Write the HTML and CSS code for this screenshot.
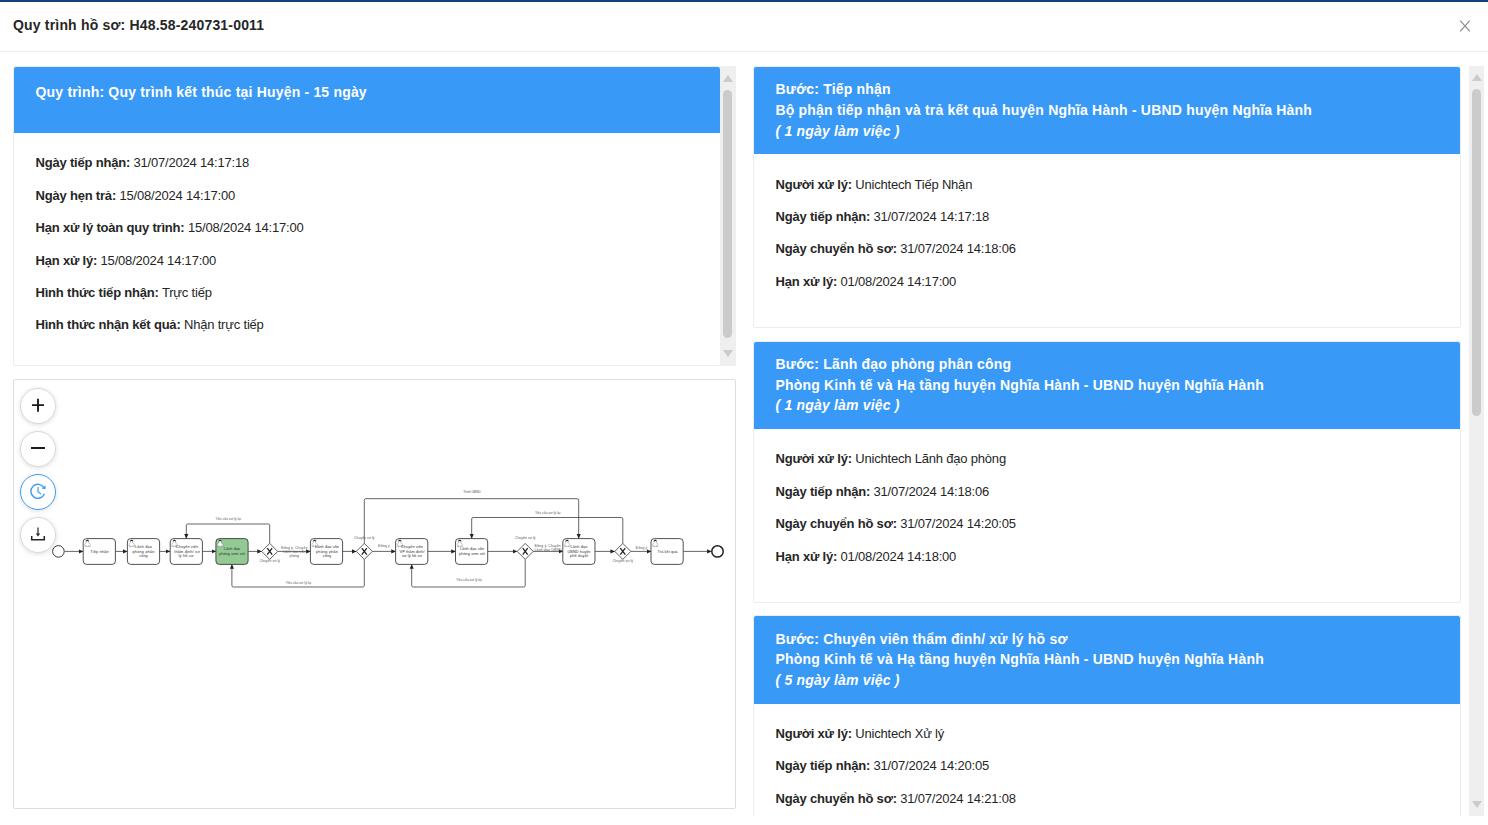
FILE: index.html
```
<!DOCTYPE html>
<html lang="vi">
<head>
<meta charset="utf-8">
<title>Quy trình hồ sơ</title>
<link rel="stylesheet" href="styles.css">
</head>
<body>
<header class="modal-head">
  <h1 class="modal-title">Quy trình hồ sơ: H48.58-240731-0011</h1>
  <svg class="close" width="12" height="12" viewBox="0 0 12 12"><path d="M1.2.6 10.8 11.4M10.8.6 1.2 11.4" fill="none" stroke="#8c8c8c" stroke-width="1.2"/></svg>
</header>
<main class="modal-body">
  <div class="left">
    <div class="summary">
      <section class="card info">
        <div class="card-head"><div>Quy trình: Quy trình kết thúc tại Huyện - 15 ngày</div></div>
        <div class="card-body">
          <p><b>Ngày tiếp nhận:</b> 31/07/2024 14:17:18</p>
          <p><b>Ngày hẹn trả:</b> 15/08/2024 14:17:00</p>
          <p><b>Hạn xử lý toàn quy trình:</b> 15/08/2024 14:17:00</p>
          <p><b>Hạn xử lý:</b> 15/08/2024 14:17:00</p>
          <p><b>Hình thức tiếp nhận:</b> Trực tiếp</p>
          <p><b>Hình thức nhận kết quả:</b> Nhận trực tiếp</p>
        </div>
      </section>
      <div class="scrollbar bar-left"><i class="up"></i><i class="thumb"></i><i class="down"></i></div>
    </div>
    <section class="canvas">
      <svg class="diagram" width="721" height="428" viewBox="14 380 721 428">
        <defs>
          <marker id="arrow" viewBox="0 0 4 4" refX="3.8" refY="2" markerWidth="4.6" markerHeight="4.6" markerUnits="userSpaceOnUse" orient="auto"><path d="M0 .2 4 2 0 3.8Z" fill="#222"/></marker>
          <g id="task">
            <rect width="32.2" height="25.8" rx="3.4" stroke="#333" stroke-width=".85"/>
            <path d="M1.7 8V5.8q0-1 1.5-1.7-.6-.7-.6-1.5Q2.8 1.2 4.2 1.2t1.5 1.3q0 .9-.7 1.6 1.9.6 1.9 1.7V8ZM3 8V6.5M5.6 8V6.5" fill="#fff" stroke="#777" stroke-width=".4"/>
            <path d="M2.8 2.9Q2.6 1.1 4.2 1.1t1.5 1.7Q4.2 2.1 2.8 2.9Z" fill="#222"/>
          </g>
          <g id="gate">
            <path d="M0-8 8 0 0 8-8 0Z" fill="#fff" stroke="#333" stroke-width=".8"/>
            <path d="M-2.5-3.2 2.5 3.2M2.5-3.2-2.5 3.2" stroke="#222" stroke-width="1.3"/>
          </g>
        </defs>
        <g class="flow">
          <path d="M64.5 551.4H83.2"/><path d="M115.5 551.4H127.3"/><path d="M159.5 551.4H170"/><path d="M202.3 551.4H216"/>
          <path d="M248.3 551.4H261.7"/><path d="M277.7 551.4H310.5"/><path d="M342.6 551.4H356.3"/><path d="M372.3 551.4H395.6"/>
          <path d="M427.8 551.4H455.6"/><path d="M487.8 551.4H517.2"/><path d="M533.2 551.4H563"/><path d="M595.2 551.4H614.8"/>
          <path d="M630.8 551.4H651.2"/><path d="M683.4 551.4H711.5"/>
          <path d="M269.7 543.4V525.4Q269.7 524 268.3 524H187.8Q186.3 524 186.3 525.4V538.4"/>
          <path d="M364.3 559.4V585.3Q364.3 587 362.8 587H233.4Q231.9 587 231.9 585.5V564.4"/>
          <path d="M364.3 543.4V500.3Q364.3 498.7 365.8 498.7H577.2Q578.7 498.7 578.7 500.2V538.4"/>
          <path d="M525.2 559.4V585.5Q525.2 587 523.7 587H413.2Q411.7 587 411.7 585.5V564.4"/>
          <path d="M622.8 543.4V519Q622.8 517.5 621.3 517.5H473.2Q471.7 517.5 471.7 519V538.4"/>
        </g>
        <g fill="#fff">
          <use href="#task" x="83.2" y="538.6"/><use href="#task" x="127.4" y="538.6"/><use href="#task" x="170.2" y="538.6"/>
          <use href="#task" x="215.9" y="538.6" fill="#93c994"/>
          <use href="#task" x="310.4" y="538.6"/><use href="#task" x="395.6" y="538.6"/><use href="#task" x="455.5" y="538.6"/>
          <use href="#task" x="562.8" y="538.6"/><use href="#task" x="651" y="538.6"/>
          <circle cx="58.4" cy="551.4" r="5.8" stroke="#222" stroke-width=".9"/>
          <circle cx="717.5" cy="551.4" r="5.7" stroke="#222" stroke-width="1.5"/>
        </g>
        <use href="#gate" x="269.7" y="551.4"/><use href="#gate" x="364.3" y="551.4"/><use href="#gate" x="525.2" y="551.4"/><use href="#gate" x="622.8" y="551.4"/>
        <g class="task-text">
          <text x="99.5" y="552.8" textLength="18.5">Tiếp nhận</text>
          <text x="143.5" y="548.4" textLength="17">Lãnh đạo</text><text x="143.5" y="552.8" textLength="22">phòng phân</text><text x="143.5" y="557.2">công</text>
          <text x="187" y="548.4" textLength="22.5">Chuyên viên</text><text x="187" y="552.8" textLength="25.5">thẩm định/ xử</text><text x="186" y="557.2" textLength="15">lý hồ sơ</text>
          <text x="232" y="550.4" textLength="16.5">Lãnh đạo</text><text x="232" y="554.8" textLength="26">phòng xem xét</text>
          <text x="327" y="548.4" textLength="24">Lãnh đạo văn</text><text x="327" y="552.8" textLength="22">phòng phân</text><text x="327" y="557.2">công</text>
          <text x="412" y="548.4" textLength="22">Chuyên viên</text><text x="412" y="552.8" textLength="25">VP thẩm định/</text><text x="412" y="557.2" textLength="20">xử lý hồ sơ</text>
          <text x="472" y="550.4" textLength="24">Lãnh đạo văn</text><text x="472" y="554.8" textLength="26">phòng xem xét</text>
          <text x="579" y="548.4" textLength="17">Lãnh đạo</text><text x="579" y="552.8" textLength="23">UBND huyện</text><text x="579" y="557.2" textLength="18">phê duyệt</text>
          <text x="667.5" y="552.8" textLength="20">Trả kết quả</text>
        </g>
        <g class="flow-text">
          <text x="228.2" y="520.4" textLength="25.6">Yêu cầu xử lý lại</text>
          <text x="269.7" y="562.4" textLength="20.5">Chuyển xử lý</text>
          <text x="294.3" y="549.2" textLength="26">Đồng ý. Chuyển</text><text x="294.3" y="553.2" textLength="22">Lãnh đạo văn</text><text x="294.3" y="557.2">phòng</text>
          <text x="298.5" y="584.4" textLength="25.6">Yêu cầu xử lý lại</text>
          <text x="364.3" y="539.2" textLength="20.5">Chuyển xử lý</text>
          <text x="384" y="546.9" textLength="11.3">Đồng ý</text>
          <text x="472" y="493" textLength="17.5">Trình UBND</text>
          <text x="469" y="581.4" textLength="25.6">Yêu cầu xử lý lại</text>
          <text x="525.2" y="539.2" textLength="20.5">Chuyển xử lý</text>
          <text x="547.7" y="514.2" textLength="25.6">Yêu cầu xử lý lại</text>
          <text x="547.7" y="546.9" textLength="26">Đồng ý. Chuyển</text><text x="548" y="551.2" textLength="27">Lãnh đạo UBND</text>
          <text x="622.8" y="562.4" textLength="20.5">Chuyển xử lý</text>
          <text x="641.5" y="549.2" textLength="11.3">Đồng ý</text>
        </g>
      </svg>
      <div class="tools">
        <button class="tool"><svg width="16" height="16" viewBox="0 0 16 16"><path d="M8 .8V13.8M2 7.1H14" stroke="#1c1c1c" stroke-width="1.9"/></svg></button>
        <button class="tool"><svg width="16" height="16" viewBox="0 0 16 16"><path d="M1 7H15" stroke="#1c1c1c" stroke-width="2"/></svg></button>
        <button class="tool active"><svg width="16" height="16" viewBox="0 0 16 16" fill="none" stroke="#3b9cf5" stroke-width="1.4"><path d="M13.9 3.8A7 7 0 1 0 14.4 9.8"/><path d="M8 3V7.7L11 10" stroke-width="1.2"/><path d="M15.5 1.3V5.3L11.7 4.5Z" fill="#3b9cf5" stroke="none"/></svg></button>
        <button class="tool"><svg width="16" height="16" viewBox="0 0 16 16" fill="none" stroke="#262626" stroke-width="1.5"><path d="M1.7 9V12.7H14.3V9"/><path d="M8 .4V8" stroke-width="1.2"/><path d="M5.8 6.6H10.2L8 9.6Z" fill="#262626" stroke="none"/></svg></button>
      </div>
    </section>
  </div>
  <div class="right">
    <div class="steps">
      <section class="card step">
        <div class="card-head"><div>Bước: Tiếp nhận</div><div>Bộ phận tiếp nhận và trả kết quả huyện Nghĩa Hành - UBND huyện Nghĩa Hành</div><div class="days">( 1 ngày làm việc )</div></div>
        <div class="card-body">
          <p><b>Người xử lý:</b> Unichtech Tiếp Nhận</p>
          <p><b>Ngày tiếp nhận:</b> 31/07/2024 14:17:18</p>
          <p><b>Ngày chuyển hồ sơ:</b> 31/07/2024 14:18:06</p>
          <p><b>Hạn xử lý:</b> 01/08/2024 14:17:00</p>
        </div>
      </section>
      <section class="card step">
        <div class="card-head"><div>Bước: Lãnh đạo phòng phân công</div><div>Phòng Kinh tế và Hạ tầng huyện Nghĩa Hành - UBND huyện Nghĩa Hành</div><div class="days">( 1 ngày làm việc )</div></div>
        <div class="card-body">
          <p><b>Người xử lý:</b> Unichtech Lãnh đạo phòng</p>
          <p><b>Ngày tiếp nhận:</b> 31/07/2024 14:18:06</p>
          <p><b>Ngày chuyển hồ sơ:</b> 31/07/2024 14:20:05</p>
          <p><b>Hạn xử lý:</b> 01/08/2024 14:18:00</p>
        </div>
      </section>
      <section class="card step">
        <div class="card-head"><div>Bước: Chuyên viên thẩm đinh/ xử lý hồ sơ</div><div>Phòng Kinh tế và Hạ tầng huyện Nghĩa Hành - UBND huyện Nghĩa Hành</div><div class="days">( 5 ngày làm việc )</div></div>
        <div class="card-body">
          <p><b>Người xử lý:</b> Unichtech Xử lý</p>
          <p><b>Ngày tiếp nhận:</b> 31/07/2024 14:20:05</p>
          <p><b>Ngày chuyển hồ sơ:</b> 31/07/2024 14:21:08</p>
        </div>
      </section>
    </div>
    <div class="scrollbar bar-right"><i class="up"></i><i class="thumb"></i><i class="down"></i></div>
  </div>
</main>
</body>
</html>
```
FILE: styles.css
```
* { box-sizing: border-box; }
body {
  margin: 0;
  height: 825px;
  overflow: hidden;
  background: #fff;
  color: #262626;
  font-family: "Liberation Sans", Arial, sans-serif;
  font-size: 13px;
}
.modal-head {
  display: flex;
  align-items: center;
  justify-content: space-between;
  height: 52px;
  padding: 0 17px 4px 13px;
  border-top: 2px solid #10427b;
  border-bottom: 1px solid #ececec;
}
.modal-title { margin: 0; font-size: 14px; letter-spacing: .18px; }
.close { margin-top: 3px; }
.modal-body { display: flex; padding: 14px 4px 9px 13px; height: 773px; }
.left { display: flex; flex-direction: column; gap: 13px; width: 723px; margin-right: 17px; }
.summary { display: flex; height: 300px; }
.card { border: 1px solid #ececec; border-radius: 2px; }
.info { flex: 1; border-right: 0; }
.card-head {
  background: #3899f7;
  color: #fff;
  font-size: 14px;
  font-weight: bold;
  line-height: 20.6px;
  letter-spacing: .19px;
  padding: 12.4px 21.5px;
  border-radius: 2px 2px 0 0;
  white-space: nowrap;
}
.info .card-head { height: 66px; padding-top: 15px; }
.days { font-style: italic; }
.card-body { padding: 14.3px 21.5px 0; }
.card-body p { margin: 0; line-height: 32.4px; letter-spacing: -.195px; white-space: nowrap; }
.scrollbar {
  display: flex;
  flex-direction: column;
  align-items: center;
  width: 15px;
  background: #efefef;
}
.up, .down { border: 5px solid transparent; border-top: 0; border-bottom: 7px solid #cbcbcb; margin-top: 9px; }
.down { border-bottom: 0; border-top: 7px solid #cbcbcb; margin: auto 0 9px; }
.thumb { width: 9px; border-radius: 5px; background: #cbcbcb; }
.bar-left { width: 16px; padding-right: 1px; }
.bar-left .thumb { height: 248px; margin-top: 8px; }
.bar-right .thumb { height: 327px; margin-top: 8px; }
.bar-right .up { margin-top: 8px; }
.bar-right .down { margin-bottom: 8px; }
.canvas { position: relative; width: 723px; height: 430px; border: 1px solid #dedede; border-radius: 2px; }
.diagram { display: block; }
.flow path { fill: none; stroke: #333; stroke-width: .75; marker-end: url(#arrow); }
.task-text { font-size: 3.85px; text-anchor: middle; fill: #333; }
.flow-text { font-size: 3.4px; text-anchor: middle; fill: #555; }
.tools { position: absolute; left: 6px; top: 8px; display: flex; flex-direction: column; gap: 7px; }
.tool {
  display: flex;
  align-items: center;
  justify-content: center;
  width: 36px;
  height: 36px;
  padding: 0;
  border: 1px solid #d9d9d9;
  border-radius: 50%;
  background: #fff;
  box-shadow: 0 1px 5px rgba(0, 0, 0, .13);
}
.tool svg { overflow: visible; }
.tool.active { border-color: #3b9cf5; }
.right { display: flex; justify-content: space-between; width: 731px; height: 750px; }
.steps { display: flex; flex-direction: column; gap: 12.7px; width: 708px; overflow: hidden; }
.step { flex: none; height: 262px; }
.step .card-head { height: 87.3px; }
```
